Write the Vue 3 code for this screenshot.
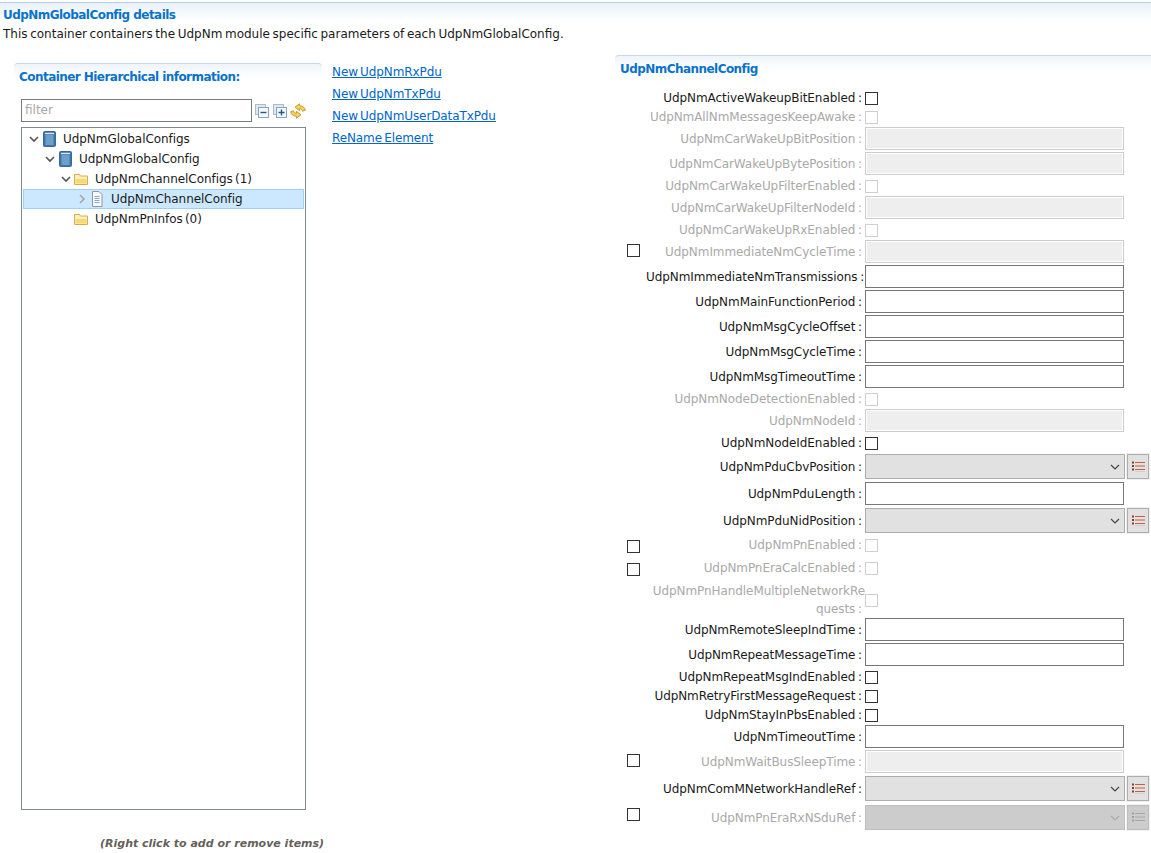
<script setup>
import { ref } from 'vue';

const links = ref(['New UdpNmRxPdu', 'New UdpNmTxPdu', 'New UdpNmUserDataTxPdu', 'ReName Element']);

const treeItems = ref([
  { label: 'UdpNmGlobalConfigs', level: 0, icon: 'book', arrow: 'open' },
  { label: 'UdpNmGlobalConfig', level: 1, icon: 'book', arrow: 'open' },
  { label: 'UdpNmChannelConfigs (1)', level: 2, icon: 'folder', arrow: 'open' },
  { label: 'UdpNmChannelConfig', level: 3, icon: 'doc', arrow: 'closed', selected: true },
  { label: 'UdpNmPnInfos (0)', level: 2, icon: 'folder', arrow: '' },
]);

const rows = ref([
  { label: 'UdpNmActiveWakeupBitEnabled', type: 'check' },
  { label: 'UdpNmAllNmMessagesKeepAwake', type: 'check', off: true },
  { label: 'UdpNmCarWakeUpBitPosition', type: 'text', off: true },
  { label: 'UdpNmCarWakeUpBytePosition', type: 'text', off: true },
  { label: 'UdpNmCarWakeUpFilterEnabled', type: 'check', off: true },
  { label: 'UdpNmCarWakeUpFilterNodeId', type: 'text', off: true },
  { label: 'UdpNmCarWakeUpRxEnabled', type: 'check', off: true },
  { label: 'UdpNmImmediateNmCycleTime', type: 'text', off: true, outer: true },
  { label: 'UdpNmImmediateNmTransmissions', type: 'text' },
  { label: 'UdpNmMainFunctionPeriod', type: 'text' },
  { label: 'UdpNmMsgCycleOffset', type: 'text' },
  { label: 'UdpNmMsgCycleTime', type: 'text' },
  { label: 'UdpNmMsgTimeoutTime', type: 'text' },
  { label: 'UdpNmNodeDetectionEnabled', type: 'check', off: true },
  { label: 'UdpNmNodeId', type: 'text', off: true },
  { label: 'UdpNmNodeIdEnabled', type: 'check' },
  { label: 'UdpNmPduCbvPosition', type: 'combo' },
  { label: 'UdpNmPduLength', type: 'text' },
  { label: 'UdpNmPduNidPosition', type: 'combo' },
  { label: 'UdpNmPnEnabled', type: 'check', off: true, outer: true },
  { label: 'UdpNmPnEraCalcEnabled', type: 'check', off: true, outer: true, tall: true },
  { label: 'UdpNmPnHandleMultipleNetworkRe', label2: 'quests', type: 'check', off: true },
  { label: 'UdpNmRemoteSleepIndTime', type: 'text' },
  { label: 'UdpNmRepeatMessageTime', type: 'text' },
  { label: 'UdpNmRepeatMsgIndEnabled', type: 'check' },
  { label: 'UdpNmRetryFirstMessageRequest', type: 'check' },
  { label: 'UdpNmStayInPbsEnabled', type: 'check' },
  { label: 'UdpNmTimeoutTime', type: 'text' },
  { label: 'UdpNmWaitBusSleepTime', type: 'text', off: true, outer: true },
  { label: 'UdpNmComMNetworkHandleRef', type: 'combo' },
  { label: 'UdpNmPnEraRxNSduRef', type: 'combo', off: true, outer: true },
]);
</script>

<template>
  <div class="page">
    <header class="page-head">
      <h1 class="title">UdpNmGlobalConfig details</h1>
      <p class="desc">This container containers the UdpNm module specific parameters of each UdpNmGlobalConfig.</p>
    </header>

    <div class="content">
      <section class="left-panel">
        <h2 class="title panel-title">Container Hierarchical information:</h2>
        <div class="filter-row">
          <div class="filter">filter</div>
          <svg class="tool" viewBox="0 0 14 14">
            <rect x="0.5" y="0.5" width="10" height="10" fill="#dfe9f3" stroke="#a9bdd1" />
            <rect x="3.5" y="3.5" width="10" height="10" fill="#f4f8fc" stroke="#8aa3bb" />
            <path d="M5.5 8.5h6" stroke="#1c5a8c" stroke-width="1.4" />
          </svg>
          <svg class="tool" viewBox="0 0 14 14">
            <rect x="0.5" y="0.5" width="10" height="10" fill="#dfe9f3" stroke="#a9bdd1" />
            <rect x="3.5" y="3.5" width="10" height="10" fill="#f4f8fc" stroke="#8aa3bb" />
            <path d="M5.5 8.5h6M8.500 5.500v6" stroke="#1c5a8c" stroke-width="1.4" />
          </svg>
          <svg class="sync" viewBox="0 0 16 16">
            <path d="M9.500.8 5 4.200l4.500 3.400V5.800c1.800 0 2.700.8 3 2.400l2.800-1C15 4.700 13 3 9.500 2.700Z" fill="#f6cf62" stroke="#c8921f" stroke-width=".9" />
            <path d="M6.500 15.200 11 11.800 6.500 8.400v1.800c-1.800 0-2.700-.8-3-2.400l-2.800 1C1 11.300 3 13 6.500 13.300Z" fill="#f6cf62" stroke="#c8921f" stroke-width=".9" />
          </svg>
        </div>

        <div class="tree">
          <div
            v-for="item in treeItems"
            :key="item.label"
            class="tree-row"
            :class="{ selected: item.selected }"
            :style="{ paddingLeft: item.level * 16 + 6 + 'px' }"
          >
            <svg class="arrow" viewBox="0 0 10 10">
              <path v-if="item.arrow === 'open'" d="M1 3l4 4 4-4" fill="none" stroke="#555" stroke-width="1.6" />
              <path v-else-if="item.arrow === 'closed'" d="M3 1l4 4-4 4" fill="none" stroke="#a6a6a6" stroke-width="1.6" />
            </svg>
            <svg v-if="item.icon === 'book'" class="node-icon" viewBox="0 0 14 16">
              <rect x="1.500" y="0.500" width="12" height="15" rx="1" fill="#3f74a8" stroke="#3a6a9a" />
              <rect x="3.500" y="4" width="8" height="10" fill="#6d9fcb" />
              <path d="M3 2.500h9" stroke="#dbe8f3" stroke-width="1.400" />
            </svg>
            <svg v-else-if="item.icon === 'folder'" class="node-icon" viewBox="0 0 14 16">
              <path d="M.5 3.500h5l1 1.500h7v8.500H.5Z" fill="#fdf0bd" stroke="#dcaa4e" />
              <rect x="1.500" y="8" width="11" height="4.500" fill="#f8d873" />
            </svg>
            <svg v-else class="node-icon" viewBox="0 0 14 16">
              <path d="M2.500.5h6.500l3 3v12h-9.500Z" fill="#f7f9fc" stroke="#8d98a6" />
              <path d="M4.500 5.500h5M4.500 7.500h5M4.500 9.500h5M4.500 11.500h5" stroke="#8fa6c0" />
            </svg>
            <span class="node-label">{{ item.label }}</span>
          </div>
        </div>

        <p class="hint">(Right click to add or remove items)</p>
      </section>

      <nav class="links">
        <a v-for="link in links" :key="link" href="#" @click.prevent>{{ link }}</a>
      </nav>

      <section class="right-panel">
        <h2 class="title panel-title">UdpNmChannelConfig</h2>
        <div class="form">
          <div
            v-for="row in rows"
            :key="row.label"
            class="row"
            :class="[row.type, { off: row.off, tall: row.tall, wrapped: row.label2 }]"
          >
            <span v-if="row.outer" class="box outer"></span>
            <label class="label">
              <template v-if="row.label2">
                <span class="first-line">{{ row.label }}</span>{{ row.label2 }} :
              </template>
              <template v-else>{{ row.label }} :</template>
            </label>

            <span v-if="row.type === 'check'" class="box"></span>
            <div v-else-if="row.type === 'text'" class="input"></div>
            <div v-else class="combo-wrap">
              <div class="select">
                <svg viewBox="0 0 10 6"><path d="M1 1l4 4 4-4" fill="none" stroke="currentColor" stroke-width="1.200" /></svg>
              </div>
              <div class="pick">
                <svg viewBox="0 0 13 11">
                  <path class="bullets" d="M0 1.500h2M0 5h2M0 8.500h2" stroke-width="2" />
                  <path d="M3 1.500h10M3 5h10M3 8.500h10" stroke="currentColor" />
                  <path d="M3 10.500h10" stroke="#cfcfcf" />
                </svg>
              </div>
            </div>
          </div>
        </div>
      </section>
    </div>
  </div>
</template>

<style>
html,
body {
  margin: 0;
  background: #fff;
}
</style>

<style scoped>
.page {
  width: 1151px;
  height: 853px;
  overflow: hidden;
  font-family: "DejaVu Sans", sans-serif;
  font-size: 12px;
  color: #1a1a1a;
}

.page-head {
  height: 53px;
  padding: 5px 0 0 3px;
  box-sizing: border-box;
  border-top: 1px solid #b9d0e8;
  margin-top: 2px;
  background: linear-gradient(#e9f1f9, #fff 18px);
}

.title {
  margin: 0;
  font-size: 12px;
  line-height: 14px;
  font-weight: bold;
  letter-spacing: -0.55px;
  color: #0872cc;
}

.desc {
  margin: 5px 0 0;
  line-height: 15px;
  word-spacing: -1.2px;
}

.content {
  display: flex;
}

.left-panel {
  flex: none;
  width: 308px;
  height: 790px;
  margin: 8px 0 0 14px;
  box-sizing: border-box;
  border-top: 1px solid #c6d8ea;
  border-radius: 4px 4px 0 0;
  background: linear-gradient(#eef4fa, #fff 14px);
  padding: 6px 0 0 5px;
}

.filter-row {
  display: flex;
  align-items: center;
  margin: 15px 0 5px 2px;
}

.filter {
  width: 231px;
  height: 23px;
  box-sizing: border-box;
  border: 1px solid #7a7a7a;
  padding: 0 3px;
  line-height: 20px;
  color: #a8a8a8;
}

.tool {
  width: 14px;
  height: 14px;
  margin-left: 3px;
}

.tool + .tool {
  margin-left: 4px;
}

.sync {
  width: 16px;
  height: 16px;
  margin-left: 3px;
}

.tree {
  width: 285px;
  height: 683px;
  margin-left: 2px;
  box-sizing: border-box;
  border: 1px solid #828790;
  padding: 1px;
}

.tree-row {
  display: flex;
  align-items: center;
  height: 20px;
  box-sizing: border-box;
}

.tree-row.selected {
  background: #cce8ff;
  box-shadow: inset 0 0 0 1px #99d1ff;
}

.arrow {
  width: 10px;
  height: 10px;
  flex: none;
}

.node-icon {
  width: 14px;
  height: 16px;
  flex: none;
  margin-left: 3px;
}

.node-label {
  margin-left: 7px;
  white-space: nowrap;
  word-spacing: -1.5px;
  letter-spacing: -0.05px;
}

.hint {
  margin: 27px 0 0 81px;
  font-size: 11px;
  font-weight: bold;
  font-style: italic;
  white-space: nowrap;
  color: #665f5a;
}

.links {
  width: 283px;
  flex: none;
  display: flex;
  flex-direction: column;
  gap: 7px;
  margin: 10px 0 0 10px;
  letter-spacing: -0.1px;
  word-spacing: -1.5px;
}

.links a {
  line-height: 15px;
  color: #0066cc;
}

.right-panel {
  flex: 1;
  min-width: 0;
  box-sizing: border-box;
  border-top: 1px solid #c6d8ea;
  border-radius: 4px 0 0 0;
  background: linear-gradient(#eef4fa, #fff 14px);
  padding-top: 6px;
}

.right-panel .panel-title {
  padding-left: 5px;
}

.form {
  display: flex;
  flex-direction: column;
  gap: 2px;
  margin-top: 13px;
}

.row {
  display: grid;
  grid-template-columns: 19px 216px 1fr;
  align-items: center;
  padding-left: 12px;
}

.row.check {
  height: 17px;
}

.row.text {
  height: 23px;
}

.row.combo {
  height: 27px;
}

.row.tall {
  height: 25px;
  padding-top: 4px;
  padding-bottom: 4px;
  box-sizing: border-box;
}

.row.wrapped {
  height: 34px;
}

.label {
  grid-column: 2;
  text-align: right;
  white-space: nowrap;
  line-height: 18px;
  word-spacing: -1px;
  letter-spacing: -0.08px;
}

.first-line {
  display: block;
  margin-right: -3px;
}

.off .label {
  color: #a9a9a9;
}

.box {
  grid-column: 3;
  width: 13px;
  height: 13px;
  margin-left: 3px;
  box-sizing: border-box;
  border: 1px solid #333;
}

.off .box {
  border-color: #cfcfcf;
}

.box.outer,
.off .box.outer {
  grid-column: 1;
  grid-row: 1;
  margin-left: 0;
  align-self: start;
  margin-top: 4px;
  border-color: #333;
}

.input {
  grid-column: 3;
  width: 259px;
  height: 23px;
  margin-left: 3px;
  box-sizing: border-box;
  border: 1px solid #777;
  background: #fff;
}

.off .input {
  border-color: #ccc;
  background: #eee;
  box-shadow: inset 0 0 0 1px #fff;
}

.combo-wrap {
  grid-column: 3;
  display: flex;
  align-items: center;
  margin-left: 3px;
}

.select {
  width: 260px;
  height: 25px;
  box-sizing: border-box;
  border: 1px solid #adadad;
  background: #e1e1e1;
  display: flex;
  align-items: center;
  justify-content: flex-end;
  padding-right: 4px;
  color: #444;
}

.select svg {
  width: 10px;
  height: 6px;
}

.pick {
  width: 22px;
  height: 25px;
  box-sizing: border-box;
  border: 1px solid #adadad;
  outline: 1px solid #efefef;
  margin-left: 2px;
  background: #e1e1e1;
  display: flex;
  align-items: center;
  justify-content: center;
  color: #c2603f;
}

.pick svg {
  width: 13px;
  height: 11px;
}

.bullets {
  stroke: #8b3a28;
}

.off .select {
  background: #ccc;
  border-color: #bfbfbf;
  color: #aaa;
}

.off .pick {
  background: #ccc;
  border-color: #bfbfbf;
  color: #a8a8a8;
}

.off .bullets {
  stroke: #a0a0a0;
}
</style>
